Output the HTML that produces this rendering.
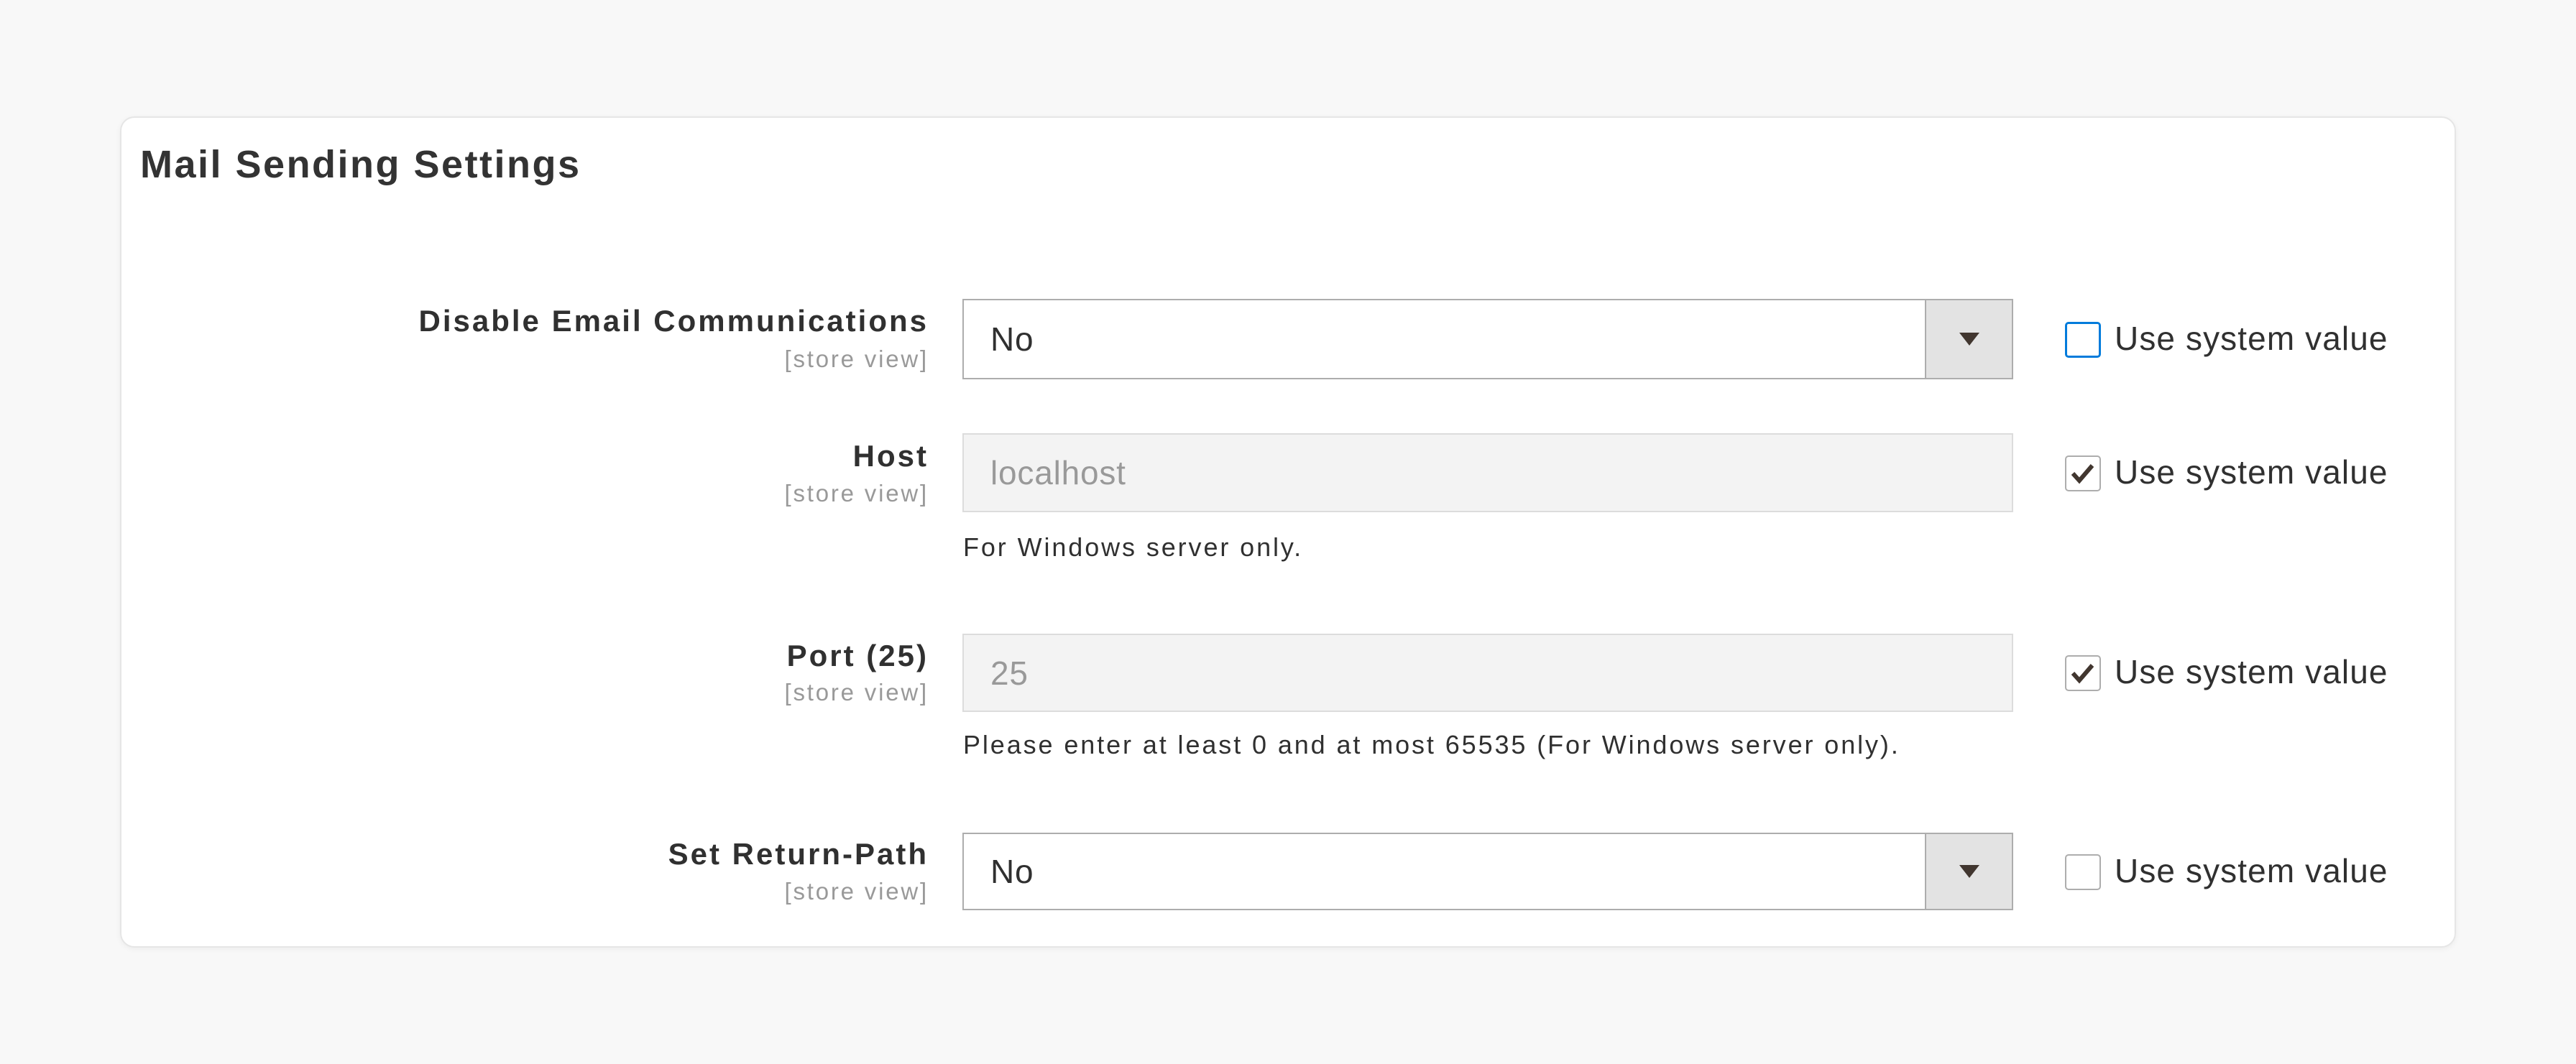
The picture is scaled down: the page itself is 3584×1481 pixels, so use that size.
<!DOCTYPE html>
<html><head><meta charset="utf-8"><style>
html,body{margin:0;padding:0;width:3584px;height:1481px;background:#f8f8f8;overflow:hidden;font-family:"Liberation Sans",sans-serif;color:#303030}
.card{position:absolute;left:167px;top:162px;width:3246px;height:1153px;background:#fff;border:2px solid #e6e6e6;border-radius:20px;box-shadow:0 2px 8px rgba(0,0,0,.05)}
h1{position:absolute;left:195px;top:198px;margin:0;font-size:54px;font-weight:bold;color:#333;letter-spacing:2.5px}
.lbl{position:absolute;right:calc(3584px - 1292px);font-size:42px;font-weight:bold;text-align:right;white-space:nowrap;color:#303030;letter-spacing:3px}
.sv{position:absolute;right:calc(3584px - 1292px);font-size:33px;color:#999;white-space:nowrap;letter-spacing:2.8px}
.field{position:absolute;left:1339px;width:1462px;border:2px solid #adadad;box-sizing:border-box;font-size:46px;background:#fff;letter-spacing:0.8px}
.field span{position:absolute;left:37px;top:50%;transform:translateY(-50%)}
.dis{background:#f3f3f3;border-color:#dcdcdc;color:#999}
.arr{position:absolute;right:0;top:0;bottom:0;width:119px;background:#e3e3e3;border-left:2px solid #adadad}
.arr:after{content:"";position:absolute;left:50%;top:50%;margin-left:-14px;margin-top:-9px;border-left:14px solid transparent;border-right:14px solid transparent;border-top:18px solid #41362f}
.cb{position:absolute;left:2873px;width:50px;height:50px;box-sizing:border-box;border:2px solid #adadad;border-radius:5px;background:#fff}
.cb.blue{border:3px solid #007bdb}
.cbt{position:absolute;left:2942px;font-size:46px;white-space:nowrap;color:#303030;letter-spacing:1.1px}
.note{position:absolute;left:1340px;font-size:36px;color:#303030;white-space:nowrap;letter-spacing:2.9px}
</style></head><body>
<div class="card"></div>
<h1>Mail Sending Settings</h1>

<div class="lbl" style="top:423px">Disable Email Communications</div>
<div class="sv" style="top:481px">[store view]</div>
<div class="field" style="top:416px;height:112px"><span>No</span><div class="arr"></div></div>
<div class="cb blue" style="top:448px"></div>
<div class="cbt" style="top:444px">Use system value</div>

<div class="lbl" style="top:611px">Host</div>
<div class="sv" style="top:668px">[store view]</div>
<div class="field dis" style="top:603px;height:110px"><span>localhost</span></div>
<div class="cb" style="top:634px"><svg width="46" height="46" viewBox="0 0 46 46" style="position:absolute;left:0;top:0"><path d="M9 23 L18 33 L36 12" fill="none" stroke="#41362f" stroke-width="6"/></svg></div>
<div class="cbt" style="top:630px">Use system value</div>
<div class="note" style="top:741px">For Windows server only.</div>

<div class="lbl" style="top:889px">Port (25)</div>
<div class="sv" style="top:945px">[store view]</div>
<div class="field dis" style="top:882px;height:109px"><span>25</span></div>
<div class="cb" style="top:912px"><svg width="46" height="46" viewBox="0 0 46 46" style="position:absolute;left:0;top:0"><path d="M9 23 L18 33 L36 12" fill="none" stroke="#41362f" stroke-width="6"/></svg></div>
<div class="cbt" style="top:908px">Use system value</div>
<div class="note" style="top:1016px">Please enter at least 0 and at most 65535 (For Windows server only).</div>

<div class="lbl" style="top:1165px">Set Return-Path</div>
<div class="sv" style="top:1222px">[store view]</div>
<div class="field" style="top:1159px;height:108px"><span>No</span><div class="arr"></div></div>
<div class="cb" style="top:1189px"></div>
<div class="cbt" style="top:1185px">Use system value</div>
</body></html>
